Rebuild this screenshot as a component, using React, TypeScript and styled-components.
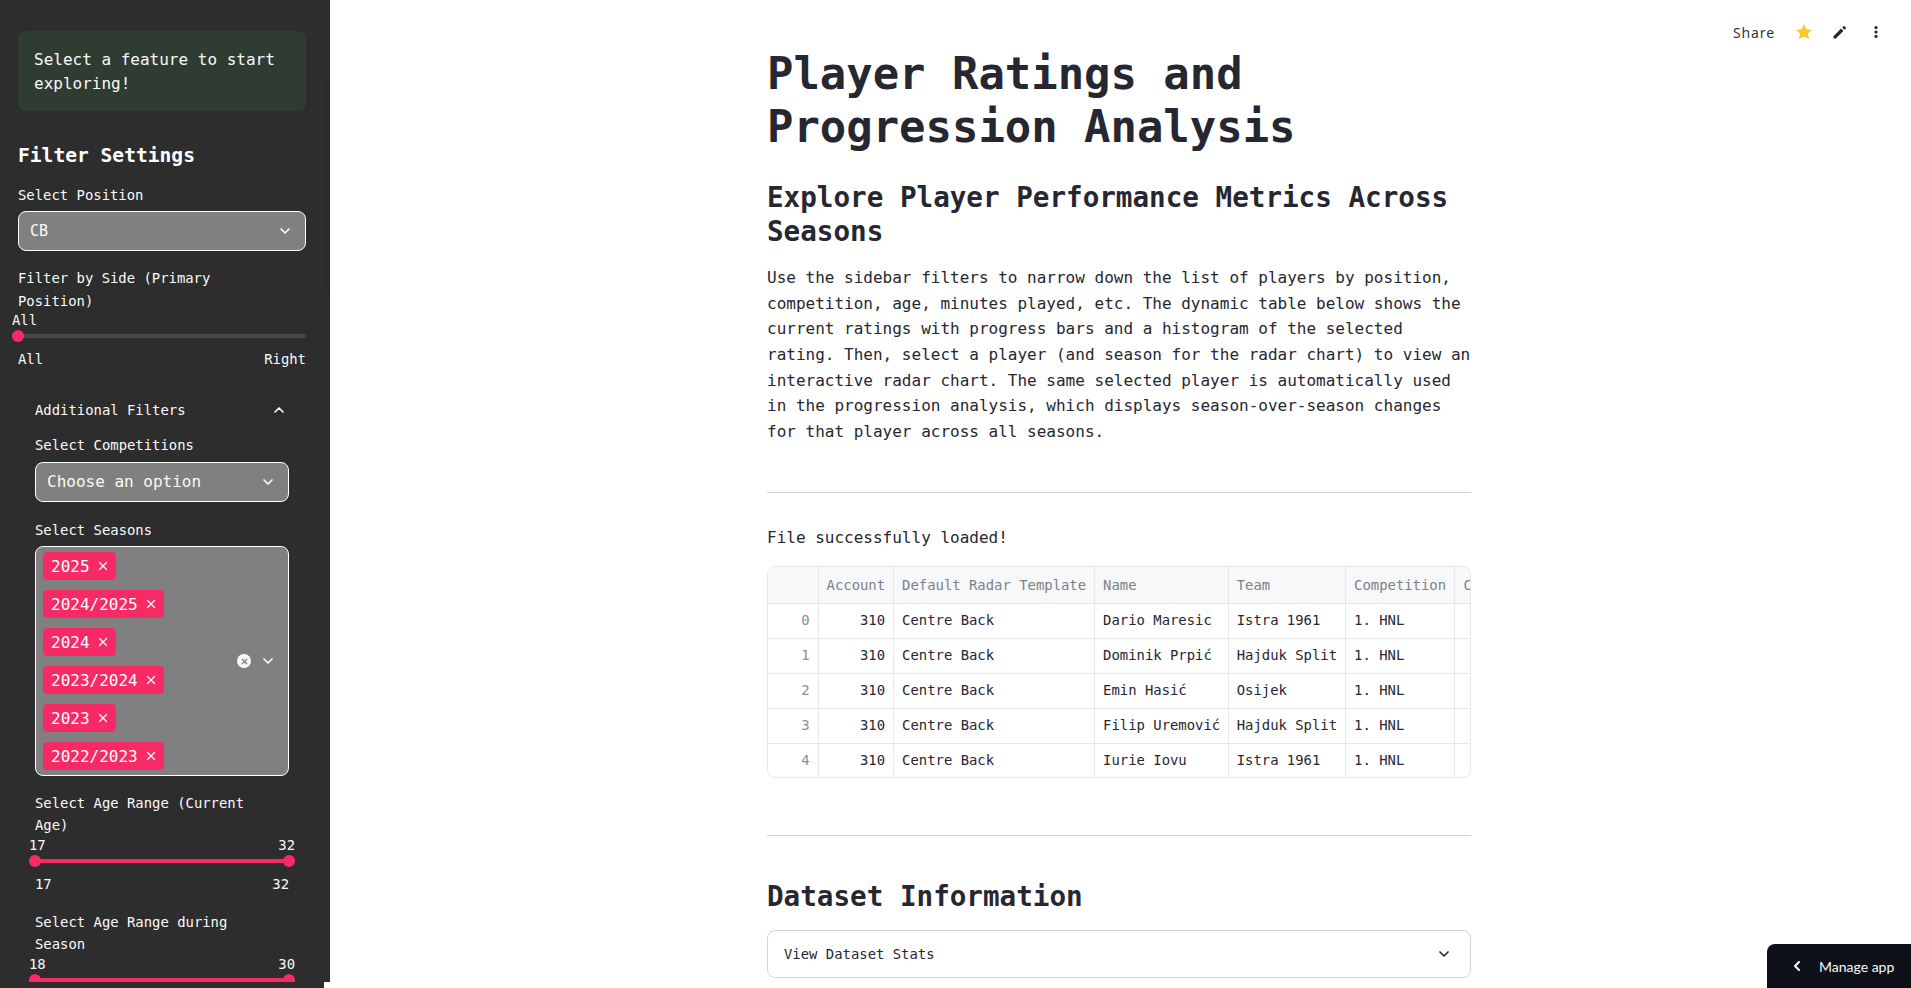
import React from "react";
import styled, { createGlobalStyle } from "styled-components";
import { ChevronDown, ChevronUp, ChevronLeft, X, CircleHelp } from "lucide-react";

const mono = `"DejaVu Sans Mono", "Liberation Mono", monospace`;

const Global = createGlobalStyle`
  html, body { margin: 0; padding: 0; height: 100%; overflow: hidden; background: #fff; }
  * { box-sizing: border-box; }
  body { font-family: ${mono}; color: #262730; }
`;

const Page = styled.div`
  display: flex;
  width: 1911px;
  height: 988px;
  overflow: hidden;
  position: relative;
`;

const Sidebar = styled.aside`
  flex: 0 0 330px;
  height: 988px;
  background: #2d2d2d;
  color: #fff;
  overflow: hidden;
  position: relative;
`;

const SideInner = styled.div`
  height: 982px;
  overflow: hidden;
  padding: 31px 24px 0 18px;
`;

const Corner = styled.div`
  position: absolute;
  right: 0;
  bottom: 0;
  width: 6px;
  height: 6px;
  background: #fff;
`;

const ScrollThumb = styled.div`
  position: absolute;
  right: 0;
  top: 78px;
  width: 5px;
  height: 215px;
  background: #2a2a2e;
`;

const Alert = styled.div`
  background: #2e3c32;
  border-radius: 8px;
  padding: 17px 16px 0;
  height: 80px;
  font-size: 16px;
  line-height: 24px;
  color: #fafafa;
`;

const SideTitle = styled.h2`
  margin: 30px 0 0;
  font-size: 19.6px;
  line-height: 30px;
  font-weight: 700;
  color: #fff;
`;

const LabelRow = styled.div<{ $top: number }>`
  display: flex;
  justify-content: space-between;
  align-items: center;
  margin-top: ${(p) => p.$top}px;
  font-size: 13.9px;
  line-height: 22.4px;
  color: #fafafa;
`;

const LabelText = styled.span<{ $width?: number }>`
  display: block;
  max-width: ${(p) => p.$width ?? 260}px;
`;

const Help = styled(CircleHelp)`
  flex: none;
  width: 16px;
  height: 16px;
  color: #31333f;
  opacity: 0.45;
`;

const Select = styled.div<{ $size: number }>`
  display: flex;
  align-items: center;
  justify-content: space-between;
  height: 40px;
  margin-top: 5px;
  padding: 0 12px 0 11px;
  background: #808080;
  border: 1px solid #fff;
  border-radius: 8px;
  font-size: ${(p) => p.$size}px;
  color: #fafafa;
`;

const Chevron = styled(ChevronDown)`
  width: 16px;
  height: 16px;
  color: #fafafa;
  stroke-width: 2.5;
`;

const SliderValues = styled.div`
  display: flex;
  justify-content: space-between;
  margin: 0 -6px;
  font-size: 13.9px;
  line-height: 16px;
  height: 15px;
  color: #fafafa;
`;

const Track = styled.div<{ $active?: boolean }>`
  position: relative;
  height: 4px;
  margin-top: 7px;
  border-radius: 2px;
  background: ${(p) => (p.$active ? "#f62b66" : "#44454f")};
`;

const Thumb = styled.span<{ $right?: boolean }>`
  position: absolute;
  top: -4px;
  ${(p) => (p.$right ? "right: -6px;" : "left: -6px;")}
  width: 12px;
  height: 12px;
  border-radius: 50%;
  background: #f62b66;
`;

const SliderEnds = styled.div`
  display: flex;
  justify-content: space-between;
  margin-top: 13px;
  font-size: 13.9px;
  line-height: 16px;
  color: #fafafa;
`;

const Expander = styled.div`
  margin-top: 32px;
  padding: 0 17px;
`;

const ExpanderHead = styled.div`
  display: flex;
  justify-content: space-between;
  align-items: center;
  height: 22px;
  font-size: 13.9px;
  color: #fafafa;
`;

const UpChevron = styled(ChevronUp)`
  width: 16px;
  height: 16px;
  margin-right: 2px;
  stroke-width: 2.5;
`;

const MultiBox = styled.div`
  display: flex;
  align-items: center;
  justify-content: space-between;
  height: 230px;
  margin-top: 5px;
  padding: 0 12px 0 7px;
  background: #808080;
  border: 1px solid #fff;
  border-radius: 8px;
`;

const Tags = styled.div`
  display: flex;
  flex-direction: column;
  align-items: flex-start;
  gap: 10px;
`;

const Tag = styled.span`
  display: inline-flex;
  align-items: center;
  gap: 6px;
  height: 28px;
  padding: 0 6px 0 8px;
  border-radius: 4px;
  background: #f62b66;
  color: #fff;
  font-size: 16px;
`;

const TagX = styled(X)`
  width: 14px;
  height: 14px;
  stroke-width: 2.2;
`;

const BoxIcons = styled.div`
  display: flex;
  align-items: center;
  gap: 9px;
`;

const ClearDot = styled.span`
  display: flex;
  align-items: center;
  justify-content: center;
  width: 14px;
  height: 14px;
  border-radius: 50%;
  background: #fafafa;
  color: #808080;
`;

const ClearX = styled(X)`
  width: 9px;
  height: 9px;
  stroke-width: 3.5;
`;

const Main = styled.main`
  flex: 1;
  position: relative;
  padding-left: 437px;
`;

const Column = styled.div`
  width: 704px;
  padding-top: 48px;
`;

const H1 = styled.h1`
  margin: 0;
  font-size: 43.9px;
  line-height: 52.8px;
  font-weight: 700;
  color: #262730;
`;

const H2 = styled.h2<{ $top: number }>`
  margin: ${(p) => p.$top}px 0 0;
  font-size: 27.6px;
  line-height: 33.6px;
  font-weight: 700;
  color: #262730;
`;

const Para = styled.p`
  margin: 17px 0 0;
  font-size: 16px;
  line-height: 25.6px;
  color: #262730;
`;

const Rule = styled.hr<{ $top: number }>`
  margin: ${(p) => p.$top}px 0 0;
  border: 0;
  height: 1px;
  background: #cfd0d3;
`;

const Loaded = styled.div`
  margin-top: 33px;
  font-size: 16px;
  line-height: 24px;
`;

const TableWrap = styled.div`
  margin-top: 16px;
  height: 212px;
  border: 1px solid #e6e7ea;
  border-radius: 8px;
  overflow: hidden;
`;

const Table = styled.table`
  border-collapse: collapse;
  table-layout: fixed;
  width: 760px;
  font-size: 13.9px;
`;

const HeadCell = styled.th<{ $w: number; $right?: boolean }>`
  width: ${(p) => p.$w}px;
  height: 36px;
  padding: 0 8px;
  background: #f7f8fa;
  color: #7d7f89;
  font-weight: 400;
  text-align: ${(p) => (p.$right ? "right" : "left")};
  border-right: 1px solid #e6e7ea;
  border-bottom: 1px solid #e6e7ea;
  white-space: nowrap;
  overflow: hidden;
`;

const Cell = styled.td<{ $right?: boolean; $dim?: boolean }>`
  height: 35px;
  padding: 0 8px 1px;
  color: ${(p) => (p.$dim ? "#8b8d95" : "#262730")};
  text-align: ${(p) => (p.$right ? "right" : "left")};
  border-right: 1px solid #e6e7ea;
  border-bottom: 1px solid #e6e7ea;
  white-space: nowrap;
  overflow: hidden;
`;

const ExpanderBox = styled.div`
  display: flex;
  justify-content: space-between;
  align-items: center;
  height: 48px;
  margin-top: 16px;
  padding: 0 18px 0 16px;
  border: 1px solid #d4d5d8;
  border-radius: 8px;
  font-size: 13.9px;
`;

const ExpandChevron = styled(ChevronDown)`
  width: 16px;
  height: 16px;
  color: #262730;
  stroke-width: 2.5;
`;

const Toolbar = styled.div`
  position: absolute;
  top: 22px;
  right: 25px;
  display: flex;
  align-items: center;
  font-size: 14px;
  color: #31333f;
`;

const ShareLabel = styled.span`
  font-family: "Noto Sans", sans-serif;
  letter-spacing: 0.9px;
  margin-right: 19px;
`;

const ToolIcon = styled.svg`
  width: 20px;
  height: 20px;
  margin-right: 16px;
  &:last-child { margin-right: 0; }
`;

const Manage = styled.div`
  position: absolute;
  right: 0;
  bottom: 0;
  width: 144px;
  height: 44px;
  display: flex;
  align-items: center;
  padding-left: 22px;
  gap: 14px;
  background: #0e1117;
  border-top-left-radius: 8px;
  color: #fafafa;
  font-family: Lato, "Noto Sans", sans-serif;
  font-size: 14px;
`;

const ManageIcon = styled(ChevronLeft)`
  width: 16px;
  height: 16px;
  stroke-width: 3;
`;

const seasons = ["2025", "2024/2025", "2024", "2023/2024", "2023", "2022/2023"];
const rows = [
  ["Dario Maresic", "Istra 1961"],
  ["Dominik Prpić", "Hajduk Split"],
  ["Emin Hasić", "Osijek"],
  ["Filip Uremović", "Hajduk Split"],
  ["Iurie Iovu", "Istra 1961"],
];

export default function App() {
  return (
    <Page>
      <Global />
      <Sidebar>
        <SideInner>
          <Alert>Select a feature to start exploring!</Alert>
          <SideTitle>Filter Settings</SideTitle>
          <LabelRow $top={13}><LabelText>Select Position</LabelText><Help /></LabelRow>
          <Select $size={15}>CB<Chevron /></Select>
          <LabelRow $top={16}><LabelText $width={210}>Filter by Side (Primary Position)</LabelText><Help /></LabelRow>
          <SliderValues><span>All</span></SliderValues>
          <Track><Thumb /></Track>
          <SliderEnds><span>All</span><span>Right</span></SliderEnds>
          <Expander>
            <ExpanderHead>Additional Filters<UpChevron /></ExpanderHead>
            <LabelRow $top={13}><LabelText>Select Competitions</LabelText><Help /></LabelRow>
            <Select $size={16}>Choose an option<Chevron /></Select>
            <LabelRow $top={17}><LabelText>Select Seasons</LabelText><Help /></LabelRow>
            <MultiBox>
              <Tags>
                {seasons.map((s) => <Tag key={s}>{s}<TagX /></Tag>)}
              </Tags>
              <BoxIcons><ClearDot><ClearX /></ClearDot><Chevron /></BoxIcons>
            </MultiBox>
            <LabelRow $top={16}><LabelText $width={230}>Select Age Range (Current Age)</LabelText><Help /></LabelRow>
            <SliderValues><span>17</span><span>32</span></SliderValues>
            <Track $active><Thumb /><Thumb $right /></Track>
            <SliderEnds><span>17</span><span>32</span></SliderEnds>
            <LabelRow $top={19}><LabelText $width={230}>Select Age Range during Season</LabelText><Help /></LabelRow>
            <SliderValues><span>18</span><span>30</span></SliderValues>
            <Track $active><Thumb /><Thumb $right /></Track>
          </Expander>
        </SideInner>
        <ScrollThumb />
        <Corner />
      </Sidebar>
      <Main>
        <Toolbar>
          <ShareLabel>Share</ShareLabel>
          <ToolIcon viewBox="0 0 24 24"><path fill="#f9c82d" d="M12 2.5l2.9 6.2 6.8.8-5 4.6 1.3 6.7-6-3.3-6 3.3 1.3-6.7-5-4.6 6.8-.8z" /></ToolIcon>
          <ToolIcon viewBox="0 0 20 20"><path fill="#262730" d="M3.5 14.2V16.5h2.3l7.6-7.6-2.3-2.3-7.6 7.6zM15.8 6.5a.7.7 0 0 0 0-1l-1.3-1.3a.7.7 0 0 0-1 0l-1.3 1.3 2.3 2.3 1.3-1.3z" /></ToolIcon>
          <ToolIcon viewBox="0 0 20 20"><circle cx="10" cy="5.6" r="1.6" fill="#262730" /><circle cx="10" cy="10" r="1.6" fill="#262730" /><circle cx="10" cy="14.4" r="1.6" fill="#262730" /></ToolIcon>
        </Toolbar>
        <Column>
          <H1>Player Ratings and Progression Analysis</H1>
          <H2 $top={27.4}>Explore Player Performance Metrics Across Seasons</H2>
          <Para>
            Use the sidebar filters to narrow down the list of players by position, competition, age, minutes played, etc. The dynamic table below shows the current ratings with progress bars and a histogram of the selected rating. Then, select a player (and season for the radar chart) to view an interactive radar chart. The same selected player is automatically used in the progression analysis, which displays season-over-season changes for that player across all seasons.
          </Para>
          <Rule $top={48} />
          <Loaded>File successfully loaded!</Loaded>
          <TableWrap>
            <Table>
              <thead>
                <tr>
                  <HeadCell $w={50} />
                  <HeadCell $w={75.6} $right>Account</HeadCell>
                  <HeadCell $w={201}>Default Radar Template</HeadCell>
                  <HeadCell $w={133.6}>Name</HeadCell>
                  <HeadCell $w={117.4}>Team</HeadCell>
                  <HeadCell $w={109.3}>Competition</HeadCell>
                  <HeadCell $w={73}>C</HeadCell>
                </tr>
              </thead>
              <tbody>
                {rows.map((r, i) => (
                  <tr key={r[0]}>
                    <Cell $right $dim>{i}</Cell>
                    <Cell $right>310</Cell>
                    <Cell>Centre Back</Cell>
                    <Cell>{r[0]}</Cell>
                    <Cell>{r[1]}</Cell>
                    <Cell>1. HNL</Cell>
                    <Cell />
                  </tr>
                ))}
              </tbody>
            </Table>
          </TableWrap>
          <Rule $top={57} />
          <H2 $top={44}>Dataset Information</H2>
          <ExpanderBox>View Dataset Stats<ExpandChevron /></ExpanderBox>
        </Column>
        <Manage><ManageIcon />Manage app</Manage>
      </Main>
    </Page>
  );
}
